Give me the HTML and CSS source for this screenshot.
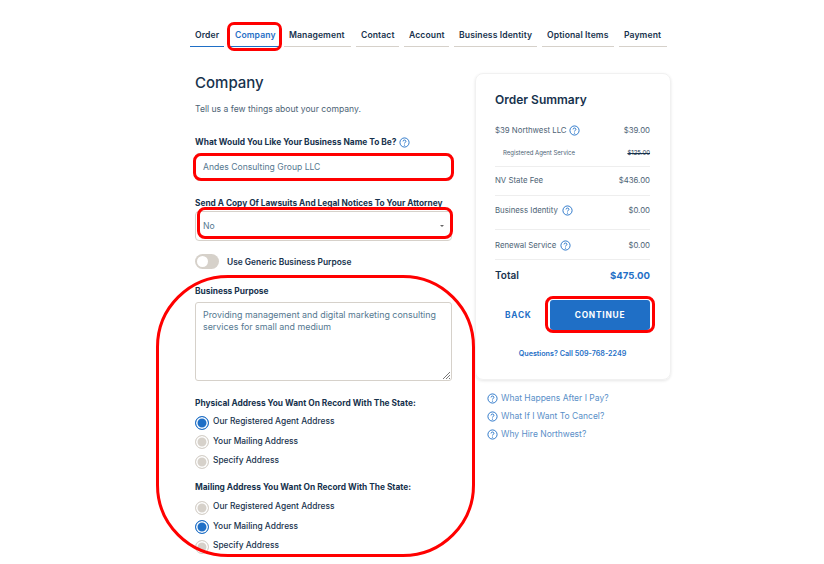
FILE: index.html
```html
<!DOCTYPE html>
<html lang="en">
<head>
<meta charset="utf-8">
<title>Company</title>
<link rel="stylesheet" href="styles.css">
</head>
<body>
<svg width="0" height="0" class="defs"><defs>
<symbol id="q" viewBox="0 0 12 12"><circle cx="6" cy="6" r="5" fill="none" stroke="currentColor" stroke-width="1"/><path d="M4.4 4.8C4.4 3.8 5.1 3.3 6 3.3S7.6 3.9 7.6 4.7C7.6 5.8 6 5.9 6 7.1" fill="none" stroke="currentColor" stroke-width="1"/><circle cx="6" cy="8.8" r=".65" fill="currentColor"/></symbol>
</defs></svg>
<div class="page">
  <nav class="tabs">
    <a class="tab done">Order</a>
    <a class="tab active">Company</a>
    <a class="tab">Management</a>
    <a class="tab">Contact</a>
    <a class="tab">Account</a>
    <a class="tab">Business Identity</a>
    <a class="tab">Optional Items</a>
    <a class="tab">Payment</a>
  </nav>
  <div class="columns">
    <main class="form">
      <h1>Company</h1>
      <p class="intro">Tell us a few things about your company.</p>
      <label class="label first">What Would You Like Your Business Name To Be? <svg class="help tight"><use href="#q"/></svg></label>
      <div class="field">Andes Consulting Group LLC</div>
      <label class="label second">Send A Copy Of Lawsuits And Legal Notices To Your Attorney</label>
      <div class="field select"><span>No</span><i class="caret"></i></div>
      <div class="switch-row"><span class="switch"><i></i></span><span class="switch-label">Use Generic Business Purpose</span></div>
      <label class="label purpose">Business Purpose</label>
      <div class="textarea">Providing management and digital marketing consulting services for small and medium
        <svg class="grip" viewBox="0 0 9 9"><path d="M1 8 8 1M4 8 8 4M7 8 8 7" stroke="#555" stroke-width=".8" fill="none"/></svg>
      </div>
      <label class="label physical">Physical Address You Want On Record With The State:</label>
      <div class="radios">
        <div class="radio on"><i></i><span>Our Registered Agent Address</span></div>
        <div class="radio"><i></i><span>Your Mailing Address</span></div>
        <div class="radio"><i></i><span>Specify Address</span></div>
      </div>
      <label class="label mailing">Mailing Address You Want On Record With The State:</label>
      <div class="radios">
        <div class="radio"><i></i><span>Our Registered Agent Address</span></div>
        <div class="radio on"><i></i><span>Your Mailing Address</span></div>
        <div class="radio"><i></i><span>Specify Address</span></div>
      </div>
    </main>
    <aside class="side">
      <section class="card">
        <h2>Order Summary</h2>
        <div class="line l1"><span>$39 Northwest LLC <svg class="help tight"><use href="#q"/></svg></span><span>$39.00</span></div>
        <div class="line sub"><span>Registered Agent Service</span><s>$125.00</s></div>
        <div class="line l2"><span>NV State Fee</span><span>$436.00</span></div>
        <div class="line l3"><span>Business Identity <svg class="help"><use href="#q"/></svg></span><span>$0.00</span></div>
        <div class="line l4"><span>Renewal Service <svg class="help"><use href="#q"/></svg></span><span>$0.00</span></div>
        <div class="total"><span>Total</span><b>$475.00</b></div>
        <div class="actions"><a class="back">BACK</a><a class="continue">CONTINUE</a></div>
        <p class="call">Questions? Call 509-768-2249</p>
      </section>
      <ul class="faq">
        <li><svg class="faq-icon"><use href="#q"/></svg>What Happens After I Pay?</li>
        <li><svg class="faq-icon"><use href="#q"/></svg>What If I Want To Cancel?</li>
        <li><svg class="faq-icon"><use href="#q"/></svg>Why Hire Northwest?</li>
      </ul>
    </aside>
  </div>
</div>
<div class="mark m-tab"></div>
<div class="mark m-name"></div>
<div class="mark m-select"></div>
<div class="mark m-big"></div>
<div class="mark m-cont"></div>
</body>
</html>
```
FILE: styles.css
```css
* { box-sizing: border-box; }
html, body { margin: 0; height: 564px; overflow: hidden; background: #fff; }
body { font-family: Inter, "Open Sans", sans-serif; color: #17324d; position: relative; }
.defs { position: absolute; }
.page { padding: 27px 0 0 190px; }
.tabs { display: flex; gap: 5px; width: 478px; }
.tab { font-size: 8.6px; font-weight: 600; height: 20px; padding: 3px 5px 0; border-bottom: 1px solid #d6d1ca; white-space: nowrap; flex: none; letter-spacing: .1px; }
.tab:nth-child(1) { width: 34px; border-bottom-color: #1f6fc6; }
.tab:nth-child(2) { width: 53px; margin-left: -1px; color: #1f6fc6; border-bottom-color: #1f6fc6; padding-left: 7px; }
.tab:nth-child(3) { width: 67px; margin-left: -2px; }
.tab:nth-child(4) { width: 43px; }
.tab:nth-child(5) { width: 45px; }
.tab:nth-child(6) { width: 83px; }
.tab:nth-child(7) { width: 72px; }
.tab:nth-child(8) { width: 48px; }
.columns { display: flex; padding: 0 0 0 5px; gap: 23px; margin-top: 26px; }
.form { width: 257px; flex: none; }
h1 { font-size: 15px; font-weight: 500; margin: 0; line-height: 20px; color: #17324d; }
.intro { font-size: 8.6px; margin: 10px 0 0; line-height: 12px; color: #4d6375; }
.label { display: block; font-size: 8.4px; font-weight: 700; line-height: 12px; color: #17324d; white-space: nowrap; }
.help { width: 11px; height: 11px; color: #1f6fc6; vertical-align: -3px; margin-left: 2px; }
.help.tight { margin-left: 0; }
.first { margin-top: 21px; }
.field { height: 28px; margin-top: 5px; border: 1px solid #d6d1ca; border-radius: 4px; font-size: 8.6px; color: #557890; padding: 0 7px; display: flex; align-items: center; justify-content: space-between; }
.second { margin-top: 16px; font-size: 8.3px; }
.field.select { height: 30px; margin-top: 2px; }
.caret { border: 2px solid transparent; border-top: 2px solid #666; border-bottom: 0; }
.switch-row { display: flex; align-items: center; margin-top: 13px; height: 15px; }
.switch { width: 24px; height: 15px; border-radius: 8px; background: #d6d1ca; padding: 2px; flex: none; }
.switch i { display: block; width: 11px; height: 11px; border-radius: 50%; background: #fff; }
.switch-label { font-size: 8.4px; font-weight: 600; margin-left: 8px; }
.purpose { margin-top: 16px; }
.textarea { position: relative; height: 79px; margin-top: 5px; border: 1px solid #d6d1ca; border-radius: 3px; font-size: 8.9px; line-height: 12px; color: #557890; padding: 6px 7px; }
.grip { position: absolute; right: 0; bottom: 0; width: 9px; height: 9px; }
.physical { margin-top: 16px; font-size: 8.35px; }
.mailing { margin-top: 7.5px; font-size: 8.35px; }
.radios { display: flex; flex-direction: column; margin-top: 7px; }
.physical + .radios { margin-top: 6px; }
.radio { display: flex; height: 19.5px; font-size: 8.4px; font-weight: 500; align-items: flex-start; }
.radio span { margin-left: 4px; line-height: 12px; }
.radio i { width: 14px; height: 14px; flex: none; border-radius: 50%; border: 1px solid #d6d1ca; background: #d6d1ca; box-shadow: inset 0 0 0 1.5px #fff; margin-top: .5px; }
.radio.on i { border-color: #1f6fc6; background: #1f6fc6; }
.side { width: 196px; flex: none; }
.card { height: 307px; border: 1px solid #f1f1f1; border-radius: 8px; box-shadow: 0 1px 3px rgba(0,0,0,.1); padding: 19px 20px 0 19px; }
h2 { font-size: 12px; font-weight: 600; line-height: 14px; margin: 0 0 17px; color: #17324d; }
.line { display: flex; justify-content: space-between; align-items: center; font-size: 7.8px; color: #4d6375; line-height: 12px; }
.line .help { width: 11px; height: 11px; }
.sub { font-size: 6px; padding: 0 0 7px 8px; margin-top: 11px; border-bottom: 1px solid #eee; }
.sub s { color: #17324d; }
.l2 { padding: 7px 0 9px; border-bottom: 1px solid #eee; }
.l3 { padding: 8px 0 13px; border-bottom: 1px solid #eee; }
.l4 { padding: 9px 0 8px; border-bottom: 1px solid #eee; }
.total { display: flex; justify-content: space-between; align-items: center; font-size: 10px; font-weight: 600; height: 30px; }
.total b { color: #1f6fc6; font-weight: 700; font-size: 9.6px; }
.actions { display: flex; justify-content: space-between; align-items: center; margin-top: 10px; padding-left: 10px; }
.back { font-size: 8.3px; font-weight: 700; letter-spacing: .8px; color: #1f6fc6; }
.continue { width: 100px; height: 30px; border-radius: 3px; background: #1f6fc6; color: #fff; font-size: 8.3px; font-weight: 700; letter-spacing: .8px; display: flex; align-items: center; justify-content: center; }
.call { margin: 18px 0 0; font-size: 7.2px; font-weight: 600; text-align: center; color: #1f6fc6; line-height: 12px; }
.faq { list-style: none; margin: 9px 0 0; padding: 0 0 0 12px; font-size: 8.5px; color: #5a8fc8; }
.faq li { display: flex; align-items: center; height: 18px; }
.faq-icon { width: 11px; height: 11px; margin-right: 3px; color: #1f6fc6; }
.mark { position: absolute; border: 3px solid #f00; pointer-events: none; }
.m-tab { left: 227px; top: 22px; width: 55px; height: 29px; border-radius: 7px; }
.m-name { left: 193px; top: 153px; width: 261px; height: 28px; border-radius: 8px; }
.m-select { left: 197px; top: 207px; width: 256px; height: 32px; border-radius: 8px; }
.m-big { left: 156px; top: 275px; width: 319px; height: 282px; border-radius: 72px; }
.m-cont { left: 545px; top: 296px; width: 110px; height: 37px; border-radius: 8px; }
```
